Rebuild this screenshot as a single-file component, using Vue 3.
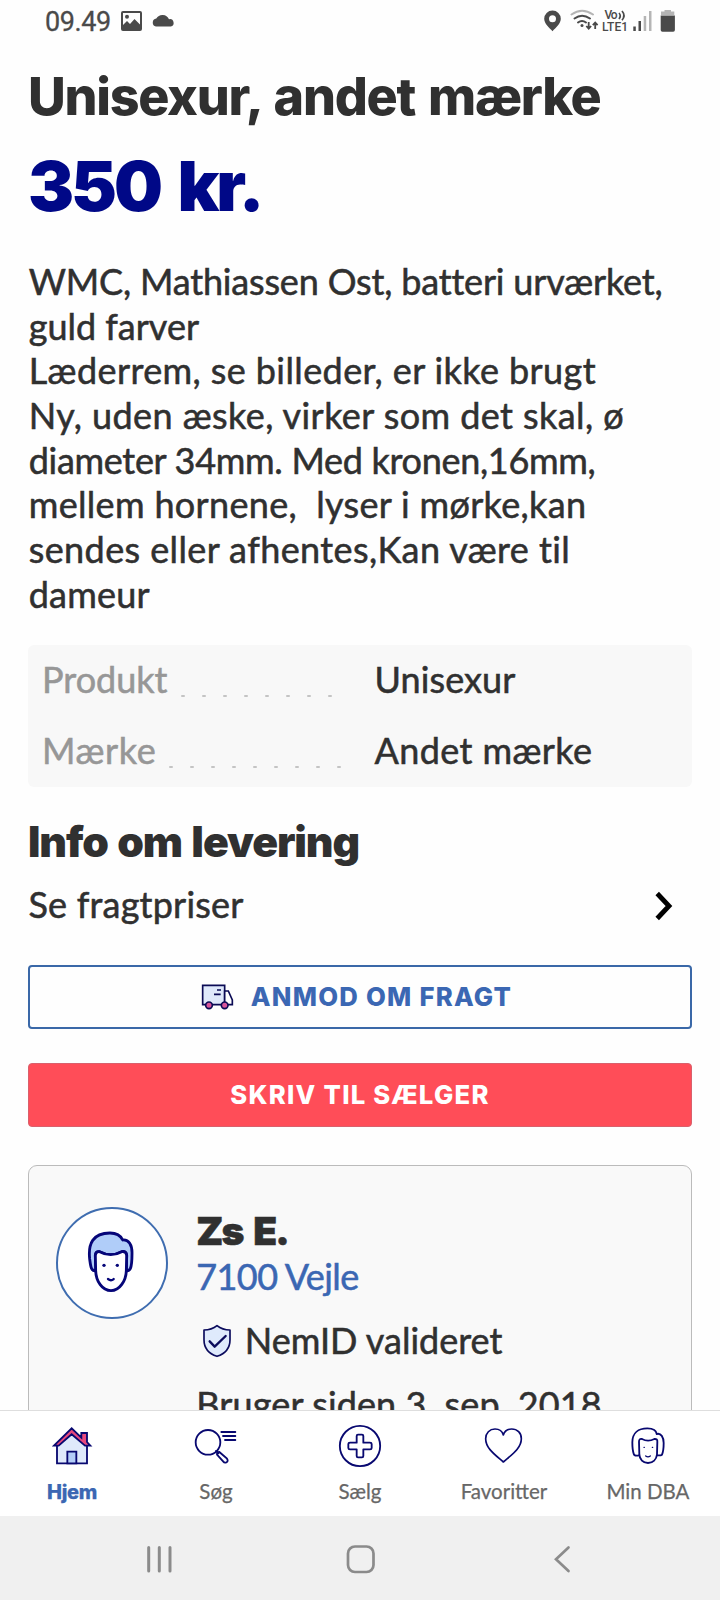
<script setup>
const description = [
  { text: 'WMC, Mathiassen Ost, batteri urværket,', track: -0.17 },
  { text: 'guld farver', track: 0 },
  { text: 'Læderrem, se billeder, er ikke brugt', track: 0.4 },
  { text: 'Ny, uden æske, virker som det skal, ø', track: 0.42 },
  { text: 'diameter 34mm. Med kronen,16mm,', track: -0.3 },
  { text: 'mellem hornene,  lyser i mørke,kan', track: 0.33 },
  { text: 'sendes eller afhentes,Kan være til', track: 0.4 },
  { text: 'dameur', track: 0.2 },
]

const specs = [
  { label: 'Produkt', value: 'Unisexur', dots: 8, indent: 139, track: 0, valueTrack: 0.1 },
  { label: 'Mærke', value: 'Andet mærke', dots: 9, indent: 127, track: 0.6, valueTrack: 0.4 },
]

const tabs = [
  { id: 'home', label: 'Hjem' },
  { id: 'search', label: 'Søg' },
  { id: 'sell', label: 'Sælg' },
  { id: 'favorites', label: 'Favoritter' },
  { id: 'account', label: 'Min DBA' },
]
</script>

<template>
  <div class="screen">
    <header class="status">
      <div class="status-left">
        <span class="clock">09.49</span>
        <svg class="photo" viewBox="0 0 21 20" width="21" height="20">
          <path fill-rule="evenodd" d="M2 0h17a2 2 0 0 1 2 2v16a2 2 0 0 1-2 2H2a2 2 0 0 1-2-2V2a2 2 0 0 1 2-2zM2 2v12l4-4 3 3 4.500-5 5.500 5.500V2z" />
          <circle cx="6" cy="5.700" r="2" />
        </svg>
        <svg class="cloud" viewBox="0 0 23 13" width="23" height="13">
          <path d="M4 12.500a4 4 0 0 1 .3-7.900A7.200 7.200 0 0 1 17 5.200a3.700 3.700 0 0 1 1.700 7.300z" />
        </svg>
      </div>
      <svg class="status-right" viewBox="540 8 140 26" width="140" height="26">
        <path fill-rule="evenodd" d="M552.500 10.500a8.300 8.300 0 0 1 8.300 8.300c0 5-5 9-8.300 12.400-3.300-3.400-8.300-7.400-8.300-12.400a8.300 8.300 0 0 1 8.300-8.300zm0 4.700a3.500 3.500 0 1 0 0 7 3.500 3.500 0 0 0 0-7z" />
        <g fill="none" stroke-width="2" stroke-linecap="round">
          <path stroke="#b5b5b5" d="M571.500 14.500q10.500-7.500 21.500 0" />
          <path stroke="#4a4a4a" d="M574.500 18.500q7.500-5.500 15.500 0M578 22.500q4-3 8 0" />
        </g>
        <circle cx="582" cy="25.500" r="1.500" />
        <path fill="none" stroke="#4a4a4a" stroke-width="1.800" d="M588.700 22v6M586.300 26l2.400 2.600 2.400-2.600M595.200 29v-6M592.800 25.200l2.400-2.600 2.400 2.600" />
        <text x="604.500" y="19.300" class="net" textLength="13">Vo</text>
        <path fill="none" stroke="#4a4a4a" stroke-width="1.700" d="M619 13q2.500 2.700 0 6M622 11q4 4.500 0 9.200" />
        <text x="602" y="31.200" class="net" textLength="26">LTE1</text>
        <path d="M633.300 26.500h2.500v4.500h-2.500zM638.500 21h2.500v10h-2.500z" />
        <path fill="#b5b5b5" d="M643.700 16h2.500v15h-2.500zM649 11h2.500v20H649z" />
        <path fill="#b5b5b5" d="M664.500 10h6.500v1.500h3.300V15h-13.300v-3.500h3.500z" />
        <path d="M660.700 15.500h14.200v14.500q0 1.700-1.700 1.700h-10.800q-1.700 0-1.700-1.700z" />
      </svg>
    </header>

    <main class="content">
      <h1 class="title">Unisexur, andet mærke</h1>
      <p class="price">350 kr.</p>

      <div class="description body">
        <div v-for="line in description" :key="line.text" :style="{ letterSpacing: line.track + 'px' }">{{ line.text }}</div>
      </div>

      <dl class="specs body">
        <div v-for="spec in specs" :key="spec.label" class="spec">
          <dt>
            <span class="spec-label" :style="{ width: spec.indent + 'px', letterSpacing: spec.track + 'px' }">{{ spec.label }}</span>
            <i v-for="n in spec.dots" :key="n" class="dot"></i>
          </dt>
          <dd :style="{ letterSpacing: spec.valueTrack + 'px' }">{{ spec.value }}</dd>
        </div>
      </dl>

      <h2 class="subtitle">Info om levering</h2>
      <div class="link-row body">
        <span>Se fragtpriser</span>
        <svg viewBox="0 0 18 30" width="18" height="30">
          <path fill="none" stroke="#000" stroke-width="4.800" d="M2.200 2.500 14 15 2.200 27.500" />
        </svg>
      </div>

      <button class="button outline">
        <svg viewBox="600 98 102 84" width="34" height="28" stroke="#0b0b55" stroke-width="5">
          <path fill="#dfe9fb" d="M608 105h66v58h-66z" />
          <path fill="#fff" d="M674 122h11l12 27v14h-23z" />
          <path fill="none" d="M651 119h12M642 132h20" />
          <circle cx="627" cy="165" r="10" fill="#d9549a" />
          <circle cx="674" cy="165" r="10" fill="#d9549a" />
        </svg>
        <span>ANMOD OM FRAGT</span>
      </button>
      <button class="button solid">SKRIV TIL SÆLGER</button>

      <section class="seller">
        <div class="avatar">
          <svg viewBox="255 240 156 200" width="52" height="66.700" fill="none" stroke="#050578" stroke-width="8.500" stroke-linejoin="round" stroke-linecap="round">
            <path fill="#b0cdf9" d="M288 365C273 368 272 352 269 330C264 285 278 252 330 252C348 252 362 260 368 273C386 271 397 287 396 315C396 335 394 352 391 359Q388 365 379 366L380 318Q378 305 366 308Q332 326 298 308Q288 306 286 318Z" />
            <path fill="#fff" d="M286 320Q287 306 299 308Q332 326 365 308Q379 306 380 320L379 365C378 395 359 425 333 425C307 425 288 397 287 365Z" />
            <path stroke-width="7" d="M324 390Q333 397 341 390" />
            <circle cx="312" cy="349" r="5" fill="#050578" stroke="none" />
            <circle cx="352" cy="349" r="5" fill="#050578" stroke="none" />
          </svg>
        </div>
        <div class="seller-info body">
          <div class="seller-name">Zs E.</div>
          <div class="seller-place">7100 Vejle</div>
          <div class="verified">
            <svg viewBox="606 525 90 102" width="30" height="34" fill="none" stroke="#0b0b5c" stroke-width="5" stroke-linejoin="round" stroke-linecap="round">
              <path fill="#dfeafc" d="M651 530Q667 543 690 543V572C690 600 672 615 651 622C630 615 612 600 612 572V543Q635 543 651 530Z" />
              <path stroke-width="7" d="m629 577 15 16 33-32" />
            </svg>
            <span>NemID valideret</span>
          </div>
          <div class="since">Bruger siden 3. sep. 2018</div>
        </div>
      </section>
    </main>

    <nav class="tabs">
      <a v-for="tab in tabs" :key="tab.id" class="tab" :class="{ active: tab.id === 'home' }">
        <svg v-if="tab.id === 'home'" class="tab-icon" viewBox="144 65 144 144" stroke-width="5.500">
          <path fill="#dfe9fb" d="M171 130 215 96l46 34v59h-90z" />
          <path fill="#b3cdf8" d="M202 154h27v35h-27z" />
          <path fill="#e8487d" d="M244 112V98h17v27l10 11h-16l-40-34-39 34h-14l53-52z" />
        </svg>
        <svg v-else-if="tab.id === 'search'" class="tab-icon" viewBox="576 65 144 144" fill="none" stroke-width="5.500">
          <circle cx="624" cy="126" r="37" />
          <path stroke-linecap="round" d="M664 95h42M669 107h37M675 119h31M648 152l7 7M651 163q-1-8 7-8l23 20q5 8-2 11-6 2-9-2z" />
        </svg>
        <svg v-else-if="tab.id === 'sell'" class="tab-icon" viewBox="1008 65 144 144" fill="none" stroke-width="5.500">
          <circle cx="1080" cy="137" r="60.500" />
          <path stroke-linejoin="round" d="M1074 103h12q4 0 4 4v20h20q5 0 5 4v12q0 4-5 4h-20v20q0 4-4 4h-12q-4 0-4-4v-20h-20q-5 0-5-4v-12q0-4 5-4h20v-20q0-4 4-4z" />
        </svg>
        <svg v-else-if="tab.id === 'favorites'" class="tab-icon" viewBox="360 65 144 144" fill="none" stroke-width="5" stroke-linejoin="round">
          <path d="M430 185C405 163 377 144 377 115C377 98 389 86 405 86C418 86 427 93 430 104C433 93 442 86 455 86C472 86 484 98 484 115C484 144 455 163 430 185Z" />
        </svg>
        <svg v-else class="tab-icon" viewBox="792 65 144 144" fill="none" stroke-width="5.500" stroke-linejoin="round" stroke-linecap="round">
          <path d="M837 165Q823 168 821 160C818 151 817 139 817 126C817 98 835 84 862 84C877 84 889 90 890 101C903 97 911 111 911 128C911 146 909 156 906 163Q902 166 892 165" />
          <path d="M837 124Q837 114 846 116Q864 126 883 116Q893 115 892 124L891 163C889 177 879 188 864 188C849 188 839 177 838 163Z" />
          <path stroke-width="4" d="M857 167q7 5 14 0M852 141h1M877 141h1" />
        </svg>
        <span>{{ tab.label }}</span>
      </a>
    </nav>

    <footer class="system">
      <svg viewBox="0 1516 720 84" width="720" height="84" fill="none" stroke="#8b8b8b" stroke-linecap="round">
        <path stroke-width="3" d="M148.700 1547.500v23.500M159.300 1547.500v23.500M170 1547.500v23.500" />
        <rect x="348" y="1546.500" width="25.500" height="25.500" rx="7" stroke-width="2.700" />
        <path stroke-width="2.700" d="M568.500 1547.500 556 1559.300l12.500 11.700" />
      </svg>
    </footer>
  </div>
</template>

<style>
body { background: #fff; }
</style>

<style scoped>
.screen {
  width: 720px;
  height: 1600px;
  display: flex;
  flex-direction: column;
  overflow: hidden;
  background: #fefefe;
  color: #303030;
  font-family: Lato, sans-serif;
}
h1, h2, p, dl, dd { margin: 0; }
.status {
  height: 42px;
  flex: none;
  display: flex;
  justify-content: space-between;
  padding: 0 40px 0 45px;
  color: #4a4a4a;
  fill: #4a4a4a;
}
.status-left { display: flex; align-items: flex-start; }
.clock {
  width: 76px;
  padding-top: 1px;
  font: 400 27px/42px Roboto, sans-serif;
  letter-spacing: -0.4px;
  -webkit-text-stroke: 0.3px currentColor;
}
.photo { margin-top: 11px; }
.cloud { margin: 14px 0 0 9.5px; }
.status-right { margin-top: 8px; }
.net { font: 500 12px/1 Roboto, sans-serif; }

.content {
  height: 1368px;
  flex: none;
  box-sizing: border-box;
  padding: 24.6px 28px 0;
  overflow: hidden;
}
.body {
  font-size: 36px;
  -webkit-text-stroke: 0.55px currentColor;
}
.title {
  font: 800 52px/60px Inter, sans-serif;
  letter-spacing: -1.3px;
  word-spacing: 3px;
}
.price {
  margin-top: 19.3px;
  font: 900 69px/80px Inter, sans-serif;
  letter-spacing: -3.1px;
  word-spacing: 7px;
  color: #000887;
}
.description {
  margin-top: 33px;
  padding-left: 0.7px;
  line-height: 44.7px;
  white-space: pre;
}
.specs {
  box-sizing: border-box;
  height: 142px;
  margin-top: 28px;
  padding: 0 14px;
  border-radius: 6px;
  background: #f8f8f8;
  line-height: 68px;
}
.spec { display: flex; height: 71.6px; }
.spec dt { display: flex; width: 332.5px; color: #979797; }
.dot {
  width: 4px;
  height: 2px;
  margin: 50px 17px 0 0;
  border-radius: 1px;
  background: #c4c4c4;
}
.spec-label { flex: none; }
.subtitle {
  margin-top: 30px;
  font: 900 42.700px/50px Inter, sans-serif;
  letter-spacing: -1.1px;
  word-spacing: 2px;
}
.link-row {
  display: flex;
  justify-content: space-between;
  align-items: center;
  margin-top: 12.9px;
  padding-left: 0.5px;
  padding-right: 19px;
  line-height: 50px;
  letter-spacing: 0.2px;
}
.link-row svg { margin-top: 4px; }
.button {
  display: flex;
  align-items: center;
  justify-content: center;
  box-sizing: border-box;
  width: 664px;
  height: 64px;
  border: 2px solid #3a68a8;
  border-radius: 4px;
  font: 800 25.700px Inter, sans-serif;
  letter-spacing: 1.25px;
}
.outline {
  gap: 17px;
  margin-top: 35.2px;
  padding: 0 8px 0 0;
  background: #fefefe;
  color: #3b67b3;
}
.solid {
  margin-top: 34px;
  padding: 0;
  border: 1px solid #d9606c;
  background: #ff4d58;
  color: #fff;
}
.seller {
  display: flex;
  margin-top: 38px;
  height: 300px;
  padding: 41px 27px 0;
  border: 1px solid #bbb;
  border-radius: 9px;
  background: #f9f9f9;
}
.avatar {
  display: flex;
  align-items: center;
  justify-content: center;
  box-sizing: border-box;
  flex: none;
  width: 112px;
  height: 112px;
  margin-right: 28.3px;
  padding-right: 2px;
  border: 2px solid #3f6db0;
  border-radius: 50%;
  background: #fff;
}
.seller-info { padding-top: 1.5px; line-height: 44px; white-space: nowrap; }
.seller-name {
  font: 900 39px/46px Inter, sans-serif;
  letter-spacing: -1.9px;
  word-spacing: 5px;
}
.seller-place { color: #3b67b3; letter-spacing: -0.6px; }
.verified { display: flex; margin-top: 20px; }
.verified svg { margin: 6px 13px 0 5.500px; }
.since { margin-top: 20px; letter-spacing: 0.12px; }

.tabs {
  display: grid;
  grid-template-columns: repeat(5, 144px);
  flex: none;
  box-sizing: border-box;
  height: 106px;
  padding-top: 11px;
  border-top: 1px solid #dedede;
  background: #fff;
}
.tab {
  display: flex;
  flex-direction: column;
  align-items: center;
  gap: 8.500px;
  color: #676767;
  font-size: 20.500px;
  line-height: 24px;
  -webkit-text-stroke: 0.25px currentColor;
}
.tab-icon { width: 48px; height: 48px; stroke: #080870; }
.active {
  color: #3b67b3;
  font: 800 20px/26px Inter, sans-serif;
  letter-spacing: -0.3px;
}
.system { height: 84px; flex: none; background: #f0f0f0; }
.system svg { display: block; }
</style>
